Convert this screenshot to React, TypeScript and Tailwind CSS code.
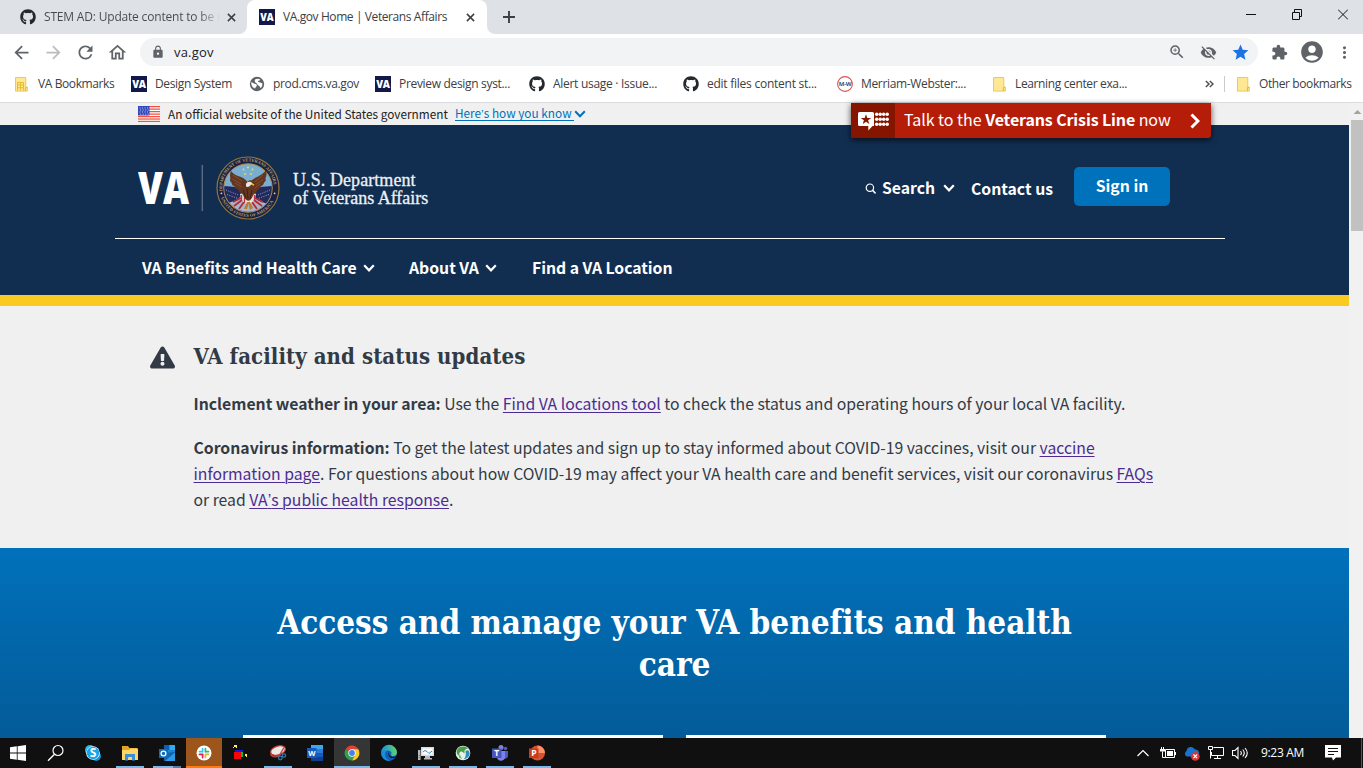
import type { ReactNode } from "react";
import { FaGithub, FaExclamationTriangle } from "react-icons/fa";
import {
  MdAccountCircle,
  MdArrowBack,
  MdArrowForward,
  MdExtension,
  MdLock,
  MdMoreVert,
  MdOutlineHome,
  MdOutlineZoomIn,
  MdRefresh,
  MdStar,
  MdVisibilityOff,
} from "react-icons/md";

const SOURCE = "font-['Noto_Sans_CJK_SC','Noto_Sans',sans-serif]";
const SLAB = "font-['DejaVu_Serif_Condensed','DejaVu_Serif',serif]";

/* ---------- small drawings ---------- */

function VaFavicon() {
  return (
    <svg className="size-4 shrink-0" viewBox="0 0 16 16">
      <rect width="16" height="16" fill="#12194a" />
      <text x="1.3" y="11.9" fontFamily="Open Sans, sans-serif" fontWeight="800" fontSize="10.5" fill="#fff" textLength="13.4" lengthAdjust="spacingAndGlyphs">
        VA
      </text>
    </svg>
  );
}

function Folder({ grid = false }: { grid?: boolean }) {
  return (
    <svg className="h-[15px] w-[13px] shrink-0" viewBox="0 0 13 15">
      <path d="M.5.5h10.3v9.6h1.5v4H.5z" fill="#ffe793" stroke="#eecb4f" />
      <path d="M10.4 14v-3.4h1.8" fill="none" stroke="#e5b92f" />
      {grid && <path d="M2.5 13.5v-8h6v8M2.5 8h6M2.5 10.7h6M5.5 5.5v8" fill="none" stroke="#e8bb33" />}
    </svg>
  );
}

function Globe() {
  return (
    <svg className="size-4 shrink-0" viewBox="0 0 16 16">
      <circle cx="8" cy="8" r="7.2" fill="#5f6368" />
      <path d="M2.2 6.2c1.6.3 2.4 1.4 3.6 1.6 1.6.3 2.4.9 1.9 2.1-.4 1-1.3 1.1-1.6 2.5C3.600 11.700 2 9.300 2.200 6.200z" fill="#fff" />
      <path d="M6.300 3.200c1.500-.8 3.500-.7 5 .2-.3 1.200-1.500 1-2.100 1.700-.6.700.2 1.300 1.200 1.200 1.200-.1 1.500.9 2.900.9.400 2-.400 4-1.900 5.100-.3-1.500-.9-2.300-2-2.800-1.300-.6-.8-1.800-2-2.300-1.500-.6-2.200-2.600-1.100-4z" fill="#fff" />
    </svg>
  );
}

function MerriamWebster() {
  return (
    <svg className="size-4 shrink-0" viewBox="0 0 16 16">
      <circle cx="8" cy="8" r="7.400" fill="#fff" stroke="#dc5259" strokeWidth="1.100" />
      <text x="1.800" y="10" fontFamily="Open Sans, sans-serif" fontWeight="700" fontSize="5.500" fill="#22588f" textLength="12.400" lengthAdjust="spacingAndGlyphs">
        M-W
      </text>
    </svg>
  );
}

function Cross({ className }: { className: string }) {
  return (
    <svg className={className} viewBox="0 0 10 10">
      <path d="M1 1l8 8M9 1l-8 8" stroke="#3c4043" strokeWidth="1.700" fill="none" />
    </svg>
  );
}

function Caret({ className, width = 2.2 }: { className: string; width?: number }) {
  return (
    <svg className={className} viewBox="0 0 12 8">
      <path d="M1.200 1.300L6 6.300l4.800-5" stroke="currentColor" strokeWidth={width} fill="none" />
    </svg>
  );
}

function UsFlag() {
  return (
    <svg className="h-4 w-[22px] shrink-0" viewBox="0 0 22 16">
      <rect width="22" height="16" fill="#fff" />
      {[0, 2.500, 5, 7.500, 10, 12.400, 14.800].map((y) => (
        <rect key={y} y={y} width="22" height="1.250" fill="#f0523f" />
      ))}
      <rect width="11.500" height="9.500" fill="#3247b8" />
      {[1.500, 3.500, 5.500, 7.700].map((y, i) =>
        [1.500, 4, 6.500, 9].map((x) => <rect key={`${x}-${y}`} x={x + (i % 2) * 0.7} y={y} width="1" height="0.900" fill="#d5dcf5" />)
      )}
    </svg>
  );
}

function Seal() {
  return (
    <svg className="size-16 shrink-0" viewBox="0 0 64 64">
      <defs>
        <path id="ring-top" d="M6.600 35A25.700 25.700 0 1 1 57.400 35" />
        <path id="ring-bottom" d="M4 38A28.600 28.600 0 0 0 60 38" />
        <clipPath id="seal-disc">
          <circle cx="32" cy="32" r="23.800" />
        </clipPath>
      </defs>
      <circle cx="32" cy="32" r="31" fill="#1a2145" stroke="#92773c" strokeWidth="1.200" />
      <text fontFamily="Liberation Serif, serif" fontSize="4.400" fontWeight="700" fill="#b3a06c">
        <textPath href="#ring-top" textLength="82">DEPARTMENT OF VETERANS AFFAIRS</textPath>
      </text>
      <text fontFamily="Liberation Serif, serif" fontSize="4.400" fontWeight="700" fill="#b3a06c">
        <textPath href="#ring-bottom" startOffset="4" textLength="66">UNITED STATES OF AMERICA</textPath>
      </text>
      <circle cx="32" cy="32" r="24.200" fill="#79aed0" stroke="#b3924b" strokeWidth="1" />
      <g clipPath="url(#seal-disc)">
        <path d="M7 30l13 1 9 5 3 4 4-4 8-5 13-1v26H7z" fill="#222a5c" />
        <path d="M12 47l9-3 5-5 12 1 5 5 9 3-8 9H20z" fill="#a9b3ca" />
        <path d="M10 34l12 5M11 38.500l11 4M54 34l-12 5M53 38.500l-11 4" stroke="#8b93b8" strokeWidth="1" strokeDasharray="1.200 1.200" />
        <path d="M17 46l8-4M18 50l8-6M23 53l5-7M47 46l-8-4M46 50l-8-6M41 53l-5-7" stroke="#b22c38" strokeWidth="1.800" />
        <path d="M24 38c4-2 12-2 16 0-1 6-4 9-8 11-4-2-7-5-8-11z" fill="#e7ddd8" />
        <path d="M25.500 39v6M28.500 39v8M38.500 39v6" stroke="#bf3140" strokeWidth="1.300" />
        <path d="M31 46l-3 7h3l1.500-5 1.500 6 3-2-3-6z" fill="#b97b2d" />
      </g>
      <path
        d="M15 15c2 3 6 5 10 6 3 1 5 3 6.500 5 1-1.600 3-2 4-1.500C39 21 46 20 50 14c1 3 .6 6-.6 8.500.8 1 .3 3-1.500 4 .2 2-1.500 3.400-3 3.600-.3 2.400-2 3.600-3.500 3.600-1 3-3.500 4-4.500 6-1 2.300-2 4.800-4.500 5-2.800-.2-4.300-3-5-5.200-1-2-4.500-3.400-5.500-6.200-1.800 0-3.200-1.200-3.500-3.200-1.600-.2-3-1.700-2.800-3.600-1.500-1-2-2.600-1.200-4C14 20 13.600 17.300 15 15z"
        fill="#64361f"
      />
      <path d="M17 19l9 6M16.500 23l8.500 5M19 27l7 4M47 19l-8 7M47 23.500l-7 5M44 28l-5 4" stroke="#8a5534" strokeWidth=".8" />
      <path d="M30 28c1-2.600 4.500-3 6-1l2 1.700-3-.2c-1 2-3 3-5 2z" fill="#eee8df" />
      <path d="M35.500 27.500l3 .8-.8 1.400-2-.8z" fill="#e9b93c" />
      <path d="M27 34l3 8M31 33l1 10M36 34l-2 9" stroke="#3d2017" strokeWidth="1" />
      <g fill="#ead75b">
        <circle cx="32" cy="11.500" r="1.100" />
        <circle cx="27.500" cy="13.500" r="1" />
        <circle cx="36.500" cy="13.500" r="1" />
        <circle cx="29" cy="18" r="1" />
        <circle cx="35" cy="18" r="1" />
      </g>
      <circle cx="5.400" cy="37.300" r=".9" fill="#e8d9a0" />
      <circle cx="58.600" cy="37.300" r=".9" fill="#e8d9a0" />
    </svg>
  );
}

/* ---------- browser chrome ---------- */

function TabStrip() {
  return (
    <div className="flex h-[34px] shrink-0 bg-[#dee1e6] text-[#3c4043]">
      <div className="flex w-[239px] items-center pl-5">
        <FaGithub className="size-4 shrink-0 text-[#24292e]" />
        <span className="ml-2 w-[176px] overflow-hidden bg-gradient-to-r from-[#45494d] from-88% to-transparent bg-clip-text text-xs tracking-[-0.185px] whitespace-nowrap text-transparent">
          STEM AD: Update content to be r
        </span>
        <Cross className="ml-[7px] size-[9px] shrink-0" />
      </div>
      <div className="flex w-2 items-end bg-white">
        <div className="h-full w-2 rounded-br-lg bg-[#dee1e6]" />
      </div>
      <div className="flex w-[240px] items-center rounded-t-lg bg-white pl-3">
        <VaFavicon />
        <span className="ml-2 w-[164px] text-xs tracking-[-0.405px] whitespace-nowrap">VA.gov Home | Veterans Affairs</span>
        <Cross className="ml-[19px] size-[9px] shrink-0" />
      </div>
      <div className="w-2 bg-white">
        <div className="h-full w-2 rounded-bl-lg bg-[#dee1e6]" />
      </div>
      <svg className="mt-[11px] ml-2 size-3" viewBox="0 0 12 12">
        <path d="M6 0v12M0 6h12" stroke="#3c4043" strokeWidth="1.900" />
      </svg>
      <div className="ml-auto flex gap-9 pt-[9px] pr-[15px]">
        <svg className="h-[11px] w-[10px]" viewBox="0 0 10 11">
          <path d="M0 5.500h10" stroke="#111" />
        </svg>
        <svg className="h-[11px] w-[10px]" viewBox="0 0 10 11">
          <path d="M.5 3.500h7v7h-7zM2.500 3V.5h7v7H8" fill="none" stroke="#111" />
        </svg>
        <svg className="h-[11px] w-[10px]" viewBox="0 0 10 11">
          <path d="M0 .5l10 10M10 .5l-10 10" stroke="#111" />
        </svg>
      </div>
    </div>
  );
}

function Toolbar() {
  return (
    <div className="flex h-9 shrink-0 items-center bg-white pr-[9px] pl-[11px] text-[#5f6368]">
      <MdArrowBack className="size-[21px] shrink-0" />
      <MdArrowForward className="ml-[11px] size-[21px] shrink-0 text-[#babcbe]" />
      <MdRefresh className="ml-[11px] size-[21px] shrink-0" />
      <MdOutlineHome className="ml-[11px] size-[21px] shrink-0" />
      <div className="ml-3 flex h-7 w-[1118px] items-center rounded-full bg-[#f1f3f4] pr-2 pl-[11px]">
        <MdLock className="size-[14px]" />
        <span className="ml-[9px] pt-px text-[13px] tracking-[0.2px] text-[#202124]">va.gov</span>
        <MdOutlineZoomIn className="ml-auto size-[18px]" />
        <MdVisibilityOff className="ml-[14px] size-[17px]" />
        <MdStar className="ml-[14px] size-[19px] text-[#1a73e8]" />
      </div>
      <MdExtension className="ml-[13px] size-[17px] shrink-0" />
      <MdAccountCircle className="ml-[11px] size-[26px] shrink-0" />
      <MdMoreVert className="ml-auto size-[19px] shrink-0" />
    </div>
  );
}

function Bookmark({ icon, className, slot = "w-6", children }: { icon: ReactNode; className: string; slot?: string; children: string }) {
  return (
    <div className={`flex shrink-0 items-center whitespace-nowrap ${className}`}>
      <span className={`flex shrink-0 ${slot}`}>{icon}</span>
      {children}
    </div>
  );
}

function Bookmarks() {
  return (
    <div className="flex h-[33px] shrink-0 items-center border-b border-[#dadce0] bg-white pb-[4px] pl-[15px] text-xs text-[#3c4043]">
      <Bookmark icon={<Folder grid />} slot="w-[23px]" className="w-[116px] tracking-[-0.4px]">VA Bookmarks</Bookmark>
      <Bookmark icon={<VaFavicon />} className="w-[118px] tracking-[-0.356px]">Design System</Bookmark>
      <Bookmark icon={<Globe />} className="w-[126px] tracking-[-0.349px]">prod.cms.va.gov</Bookmark>
      <Bookmark icon={<VaFavicon />} className="w-[154px] tracking-[-0.32px]">Preview design syst...</Bookmark>
      <Bookmark icon={<FaGithub className="size-4 text-[#24292e]" />} className="w-[154px] tracking-[-0.29px]">Alert usage · Issue...</Bookmark>
      <Bookmark icon={<FaGithub className="size-4 text-[#24292e]" />} className="w-[154px] tracking-[-0.25px]">edit files content st...</Bookmark>
      <Bookmark icon={<MerriamWebster />} className="w-[156px] tracking-[-0.338px]">Merriam-Webster:...</Bookmark>
      <Bookmark icon={<Folder />} slot="w-[22px]" className="w-[212px] tracking-[-0.363px]">Learning center exa...</Bookmark>
      <svg className="h-2 w-[9px] shrink-0" viewBox="0 0 9 8">
        <path d="M.8 1L4 4 .8 7M4.800 1L8 4 4.800 7" fill="none" stroke="#4d5156" strokeWidth="1.500" />
      </svg>
      <div className="mr-3 ml-[10px] h-4 w-px bg-[#c9cbce]" />
      <Bookmark icon={<Folder />} slot="w-[22px]" className="w-[126px] tracking-[-0.4px]">Other bookmarks</Bookmark>
    </div>
  );
}

/* ---------- page ---------- */

function CrisisLine() {
  return (
    <a className="absolute top-0 left-[851px] flex h-[35px] w-[360px] items-center rounded-b-[3px] bg-[#b51d09] text-white shadow-[0_2px_6px_rgba(0,0,0,0.7)]">
      <span className="flex h-full w-11 items-center rounded-bl-[3px] bg-[#861500] pl-[7px]">
        <svg className="mt-[2px] h-[19px] w-8" viewBox="0 0 32 19">
          <path d="M1.500 0h13A1.500 1.500 0 0 1 16 1.500V14h-1.500L10.300 18.500V14H1.500A1.500 1.500 0 0 1 0 12.500v-11A1.500 1.500 0 0 1 1.500 0z" fill="#fff" />
          <path d="M8 2.200l1.300 3.700h3.900l-3.100 2.400 1.200 3.800L8 9.800l-3.300 2.300 1.200-3.800-3.100-2.400h3.900z" fill="#861500" />
          {[2.200, 7.200, 12.200].map((y) => [18.700, 22.200, 25.700, 29.200].map((x) => <circle key={`${x}-${y}`} cx={x} cy={y} r="1.750" fill="#fff" />))}
        </svg>
      </span>
      <span className="ml-[9px] w-[270px] pb-[4px] text-[16px] leading-none tracking-[-0.03px] whitespace-nowrap">
        Talk to the <b className="tracking-[-0.13px]">Veterans Crisis Line</b> now
      </span>
      <svg className="ml-4 h-4 w-[10px]" viewBox="0 0 10 16">
        <path d="M1.500 1.500L8 8l-6.500 6.500" stroke="#fff" strokeWidth="3" fill="none" />
      </svg>
    </a>
  );
}

function GovBanner() {
  return (
    <div className="flex h-[22px] shrink-0 items-center bg-[#f0f0f0] pl-[138px] text-[11.8px] leading-none text-[#212121]">
      <UsFlag />
      <span className="ml-2 w-[287px] pb-px whitespace-nowrap">An official website of the United States government</span>
      <span className="border-b border-[#0071bb] whitespace-nowrap text-[#0071bb]">
        Here<span className="font-['Liberation_Sans',sans-serif]">’</span>s how you know&nbsp;
      </span>
      <Caret className="h-2 w-3 text-[#0071bb]" width={2} />
    </div>
  );
}

function Header() {
  return (
    <header className="h-[181px] shrink-0 border-b-[11px] border-[#fac922] bg-[#112e51] pr-[124px] pl-[115px] text-[15.75px] leading-none font-bold text-white">
      <div className="flex h-[114px] items-center border-b border-white pt-[12px] pl-[23px]">
        <svg className="h-[46px] w-[65px] shrink-0" viewBox="0 0 65 46">
          <text x="0" y="38.500" fontFamily="Open Sans, sans-serif" fontWeight="800" fontSize="44" fill="#fff" textLength="51" lengthAdjust="spacingAndGlyphs">
            VA
          </text>
          <path d="M64.300 0v46" stroke="#5b6d86" strokeWidth="1.400" />
        </svg>
        <div className="ml-[13px] flex">
          <Seal />
        </div>
        <div className="ml-[13px] w-[138px] pt-[2px] font-['Liberation_Serif',serif] text-[18px] leading-[18px] font-normal whitespace-nowrap text-[#eef1f5] [-webkit-text-stroke:0.3px_#eef1f5]">
          <div className="tracking-[0.08px]">U.S. Department</div>
          <div>of Veterans Affairs</div>
        </div>
        <svg className="mt-px ml-[434px] size-[11px] shrink-0" viewBox="0 0 11 11">
          <circle cx="4.900" cy="4.700" r="3.700" fill="none" stroke="#fff" strokeWidth="1.200" />
          <path d="M7.600 7.400l3 3" stroke="#fff" strokeWidth="1.500" />
        </svg>
        <span className="ml-[6px] w-[61px]">Search</span>
        <Caret className="h-2 w-3 shrink-0" />
        <span className="ml-[16px] w-[103px] pt-[2px]">Contact us</span>
        <div className="-mt-[3px] flex h-[39px] w-24 shrink-0 items-center justify-center rounded-[5px] bg-[#0071bb]">Sign in</div>
      </div>
      <nav className="flex h-14 items-center pt-px pl-[27px] whitespace-nowrap">
        <span className="w-[221px]">VA Benefits and Health Care</span>
        <Caret className="h-2 w-3" />
        <span className="ml-[34px] w-[76px]">About VA</span>
        <Caret className="h-2 w-3" />
        <span className="ml-[35px] tracking-[-0.03px]">Find a VA Location</span>
      </nav>
    </header>
  );
}

function Link({ children }: { children: ReactNode }) {
  return <a className="text-[#4c2c92] underline decoration-1 underline-offset-[2px]">{children}</a>;
}

function StatusUpdates() {
  return (
    <section className="flex h-[242px] shrink-0 bg-[#f0f0f0] pl-[150px] text-[#323a45]">
      <FaExclamationTriangle className="mt-[39px] size-[25px] shrink-0" />
      <div className="ml-[18.500px] whitespace-nowrap">
        <h2 className={`mt-[35px] text-[22px] leading-[30px] font-bold tracking-[0.070px] ${SLAB}`}>VA facility and status updates</h2>
        <div className="mt-[20px] text-[15.75px] leading-[26px]">
          <p>
            <b>Inclement weather in your area:</b> Use the <Link>Find VA locations tool</Link> to check the status and operating hours of your local VA facility.
          </p>
          <p className="mt-[18px]">
            <b>Coronavirus information:</b> To get the latest updates and sign up to stay informed about COVID-19 vaccines, visit our <Link>vaccine</Link>
            <br />
            <Link>information page</Link>. For questions about how COVID-19 may affect your VA health care and benefit services, visit our coronavirus <Link>FAQs</Link>
            <br />
            or read{" "}
            <Link>
              VA<span className="font-['Liberation_Sans',sans-serif]">’</span>s public health response
            </Link>
            .
          </p>
        </div>
      </div>
    </section>
  );
}

function Hero() {
  return (
    <section className="flex h-[190px] shrink-0 flex-col items-center bg-gradient-to-b from-[#0071bb] to-[#045b98] text-white">
      <h1 className={`mt-[54px] h-[133px] text-center text-[33px] leading-[42px] font-bold tracking-[-0.050px] whitespace-nowrap ${SLAB}`}>
        Access and manage your VA benefits and health
        <br />
        care
      </h1>
      <div className="flex h-[3px] gap-[23px]">
        <div className="w-[420px] bg-white" />
        <div className="w-[420px] bg-white" />
      </div>
    </section>
  );
}

function Scrollbar() {
  return (
    <div className="flex w-[14px] shrink-0 flex-col bg-[#f1f1f1] pl-[2px]">
      <svg className="h-[17px] w-3" viewBox="0 0 12 17">
        <path d="M6.500 7L10.500 11H2.500z" fill="#a3a3a3" />
      </svg>
      <div className="h-[111px] bg-[#c1c1c1]" />
    </div>
  );
}

/* ---------- taskbar ---------- */

function Task({ bar = "", bg = "", children }: { bar?: string; bg?: string; children: ReactNode }) {
  return (
    <div className={`flex h-[30px] w-9 shrink-0 flex-col items-center ${bg}`}>
      <svg className="mt-[7px] mb-[5px] size-4 shrink-0 overflow-visible" viewBox="0 0 16 16">
        {children}
      </svg>
      <div className={`h-[2px] ${bar}`} />
    </div>
  );
}

const OPEN = "w-7 bg-[#76b9ed]";

function Letter({ x, y, size = 8.500, children }: { x: number; y: number; size?: number; children: string }) {
  return (
    <text x={x} y={y} fontFamily="Open Sans, sans-serif" fontWeight="700" fontSize={size} fill="#fff" textAnchor="middle">
      {children}
    </text>
  );
}

function Taskbar() {
  return (
    <div className="flex h-[30px] shrink-0 gap-px bg-[#101010] pl-px">
      <Task>
        <path d="M-1 2.300L5.800 1.300v6.300H-1zM6.600 1.200L15 0v7.600H6.600zM-1 8.400h6.800v6.300L-1 13.700zM6.600 8.400H15V16l-8.400-1.200z" fill="#fff" />
      </Task>
      <Task>
        <circle cx="10" cy="5.500" r="5" fill="none" stroke="#fff" strokeWidth="1.200" />
        <path d="M6.500 9.200L0 15.700" stroke="#fff" strokeWidth="1.400" />
      </Task>
      <Task>
        <circle cx="5" cy="5" r="5" fill="#28b4ee" />
        <circle cx="11.200" cy="11.200" r="4.800" fill="#0c8fd9" />
        <circle cx="8" cy="8" r="6.800" fill="#fff" />
        <circle cx="8" cy="8" r="6.200" fill="#15a5e8" />
        <Letter x={8} y={12.300} size={12}>S</Letter>
      </Task>
      <Task bar={OPEN}>
        <path d="M0 1h6l1.500 2H15v4H0z" fill="#e9a220" />
        <path d="M0 5h7l1.500-1.500H16V15H0z" fill="#fdd669" />
        <path d="M3 15.500V9h10v6.500h-3V12H6v3.500z" fill="#3a8fd9" />
      </Task>
      <Task bar="w-7 bg-gradient-to-r from-[#76b9ed] from-70% to-[#547fa2] to-70%">
        <path d="M5 0h11v15H5z" fill="#1b86d4" />
        <path d="M5 0h5.500v5H5z" fill="#0d5fae" />
        <path d="M10.500 0H16v5h-5.500z" fill="#32a9ec" />
        <path d="M5 8l11-1v9H5z" fill="#1165b0" />
        <path d="M16 7.500V16H6z" fill="#2c9be4" />
        <path d="M0 4h9v9H0z" fill="#0f6cbd" />
        <circle cx="4.500" cy="8.500" r="2.400" fill="none" stroke="#fff" strokeWidth="1.300" />
      </Task>
      <Task bg="bg-[#9c551b]" bar="w-9 bg-[#ff7a08]">
        <circle cx="8" cy="8" r="7.500" fill="#fff" />
        <path d="M6.600 3.500v3.300M3.500 6.600h3" stroke="#36c5f0" strokeWidth="1.700" strokeLinecap="round" />
        <path d="M9.400 3.500v3.300M9.500 6.600h3" stroke="#2eb67d" strokeWidth="1.700" strokeLinecap="round" />
        <path d="M3.500 9.400h3.300M6.600 9.600v3" stroke="#e01e5a" strokeWidth="1.700" strokeLinecap="round" />
        <path d="M9.400 9.400h3.100M9.400 9.500v3" stroke="#ecb22e" strokeWidth="1.700" strokeLinecap="round" />
      </Task>
      <Task>
        <path d="M1 7h7v7H1z" fill="#f20808" />
        <path d="M2 5h8v2H2z" fill="#1417e8" />
        <path d="M8 7h2v5H8z" fill="#0bb83a" />
        <path d="M1 0h3v3H3V2H1zM0 2h1v1H0zM12 9h2v3h-1v-1h-1z" fill="#f8f060" />
      </Task>
      <Task bar={OPEN}>
        <ellipse cx="8" cy="5.500" rx="7.600" ry="4.400" fill="#eee9e9" stroke="#c23b36" strokeWidth="1.200" transform="rotate(-18 8 5.500)" />
        <path d="M.5 8.500c1.500 4.500 8 4.500 10 0l3.500-6" stroke="#b24b48" strokeWidth="1.400" fill="none" />
        <circle cx="10.300" cy="13" r="1.800" fill="none" stroke="#2f77ad" strokeWidth="1.300" />
        <circle cx="14" cy="10.500" r="1.700" fill="none" stroke="#2f77ad" strokeWidth="1.300" />
      </Task>
      <Task>
        <path d="M4 0h12v4H4z" fill="#41a5ee" />
        <path d="M4 4h12v4H4z" fill="#2b7cd3" />
        <path d="M4 8h12v4H4z" fill="#185abd" />
        <path d="M4 12h12v4H4z" fill="#103f91" />
        <path d="M0 3h9.500v10H0z" fill="#185abd" />
        <Letter x={4.800} y={10.900} size={7.500}>W</Letter>
      </Task>
      <Task bg="bg-[#353535]" bar="w-9 bg-[#76b9ed]">
        <path d="M8 8L1.600 4.300A7.400 7.400 0 0 1 14.400 4.300z" fill="#e04335" />
        <path d="M8 8L1.600 4.300A7.400 7.400 0 0 0 8 15.400L11.200 9.800z" fill="#2da14f" />
        <path d="M8 4.300h6.400A7.400 7.400 0 0 1 8 15.400l3.200-5.600z" fill="#fdcb1d" />
        <circle cx="8" cy="8" r="3.700" fill="#fff" />
        <circle cx="8" cy="8" r="2.900" fill="#4480ee" />
      </Task>
      <Task>
        <defs>
          <linearGradient id="edge-top" x1="0" x2="1">
            <stop offset="0" stopColor="#1a8fde" />
            <stop offset="1" stopColor="#5fd46a" />
          </linearGradient>
        </defs>
        <circle cx="8" cy="8" r="7.900" fill="#0f62b5" />
        <path d="M.1 8A7.900 7.900 0 0 1 15.900 7.500c0 3-2.500 3.800-4.700 3.500-1-.2-1.500-1-.9-2 .7-1.500-.6-3.400-2.800-3.500C4 5.400.8 6.300.1 8z" fill="url(#edge-top)" />
        <path d="M.1 8c.8-2 3.500-2.700 6-2.300-2 1.200-2.800 4.600-1 7.300 1 1.500 2.500 2.300 4 2.800C4 16.300.1 12.500.1 8z" fill="#1c8cdc" />
        <path d="M8.300 7.300c-.9 1.700.3 4.200 3 4.600 1.700.2 3.200-.2 4.500-1.200l-.5 1.600c-3.500 1.600-7.300.3-7.800-2.400-.2-1.100.1-2 .8-2.600z" fill="#101010" />
      </Task>
      <Task bar={OPEN}>
        <path d="M3 2h13v9H3z" fill="#d8dcdf" />
        <path d="M4.500 3.500h10v6h-10z" fill="#fff" />
        <path d="M5 7l2-1.500 2 1 2 2 3-2.500" stroke="#2a8bc4" fill="none" />
        <path d="M7 11h5v2h2v1.500H6V13h1zM0 5h2.500v10H0z" fill="#b8bcbf" />
        <path d="M.5 12.500h2M.5 10.500h2" stroke="#54a548" />
      </Task>
      <Task bar={OPEN}>
        <circle cx="8" cy="8" r="7.300" fill="#e8f0ee" />
        <path d="M2 5c2-4 8-4.500 11-1.500-3 .5-4 2-3.500 5L7 6.500C5 6 3.500 8 4.500 11 2 10 1 7.500 2 5z" fill="#48a047" />
        <path d="M10.500 6c2-1.500 4-.5 4.100 2.500 0 3-3 5.500-6.100 5.800 2-1.500 2.800-4 2-8.300z" fill="#2e8fbe" />
        <path d="M4.500 9l2.500 5-3-1.500z" fill="#5cb750" />
      </Task>
      <Task bar={OPEN}>
        <circle cx="13.500" cy="3.500" r="1.800" fill="#5059c9" />
        <circle cx="9" cy="2.500" r="2.500" fill="#7b83eb" />
        <path d="M11 6h5v5a3 3 0 0 1-4 2.500z" fill="#5059c9" />
        <path d="M5 6h8v6c0 5-8 5-8 0z" fill="#7b83eb" />
        <path d="M0 3.500h9.500V13H0z" fill="#4b53bc" />
        <Letter x={4.800} y={11.200}>T</Letter>
      </Task>
      <Task bar={OPEN}>
        <circle cx="8.500" cy="8" r="7.500" fill="#d35230" />
        <path d="M8.500.5A7.500 7.500 0 0 1 16 8H8.500z" fill="#ff8f6b" />
        <path d="M0 3.500h9.500V13H0z" fill="#c43e1c" />
        <Letter x={4.800} y={11.200}>P</Letter>
      </Task>
      <div className="ml-auto flex items-center gap-2 text-white">
        <svg className="mr-[3px] h-2 w-3" viewBox="0 0 12 8">
          <path d="M.5 7L6 1.500 11.500 7" stroke="#fff" strokeWidth="1.200" fill="none" />
        </svg>
        <svg className="size-4" viewBox="0 0 16 16">
          <path d="M5.500 4.500h9v8h-9zM15.500 7v3M2.500 6.500v6h3M1.500 2v2.500M3.500 2v2.500" fill="none" stroke="#fff" />
          <path d="M0 4h5v2.500H0zM7 6h6v5H7z" fill="#fff" />
        </svg>
        <svg className="size-4" viewBox="0 0 16 16">
          <path d="M3 11.500A3 3 0 0 1 2.500 6 4.500 4.500 0 0 1 11 4.500a3.500 3.500 0 0 1 4 4l-1 3z" fill="#1773ce" />
          <circle cx="11.300" cy="11.300" r="4.400" fill="#d93636" />
          <path d="M9.500 9.500l3.600 3.600M13.100 9.500l-3.600 3.600" stroke="#fff" strokeWidth="1.200" />
        </svg>
        <svg className="size-4" viewBox="0 0 16 16">
          <path d="M5.500 2.500h10v8h-12V7M9.500 10.500v3M6 13.500h7M.5 1.500h4v3h-4zM2.500 4.500v9" fill="none" stroke="#fff" />
        </svg>
        <svg className="size-4" viewBox="0 0 16 16">
          <path d="M.5 5.500H3l3-3v11l-3-3H.5zM8.500 6c1 1.200 1 2.800 0 4M10.700 4.500c1.800 2 1.800 5 0 7M13 3c2.700 3 2.700 7 0 10" fill="none" stroke="#fff" strokeWidth="1.100" />
        </svg>
        <span className="ml-[5px] w-[52px] text-xs tracking-[-0.32px] whitespace-nowrap">9:23 AM</span>
        <svg className="ml-1 size-4" viewBox="0 0 16 16">
          <path d="M0 0h16v12.500h-5L8 15.500l-1-3H0z" fill="#fff" />
          <path d="M3 3.500h10M3 6.500h10M3 9.500h6" stroke="#101010" />
        </svg>
        <div className="ml-3 h-[30px] w-[2px] border-l border-[#555]" />
      </div>
    </div>
  );
}

export default function App() {
  return (
    <div className="flex h-[768px] w-[1363px] flex-col overflow-hidden bg-white font-['Open_Sans',sans-serif]">
      <TabStrip />
      <Toolbar />
      <Bookmarks />
      <div className="relative flex h-[635px] shrink-0">
        <main className={`flex w-[1349px] flex-col overflow-hidden ${SOURCE}`}>
          <GovBanner />
          <Header />
          <StatusUpdates />
          <Hero />
          <CrisisLine />
        </main>
        <Scrollbar />
      </div>
      <Taskbar />
    </div>
  );
}
